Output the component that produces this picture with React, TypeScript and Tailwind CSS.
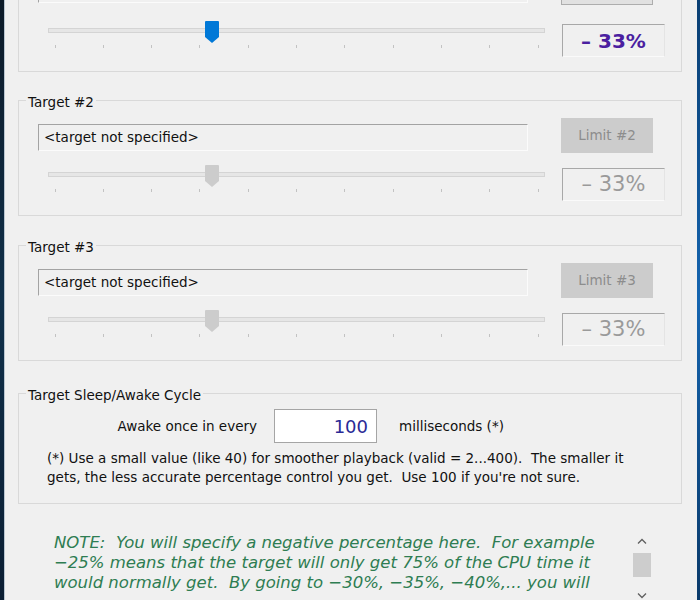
import React from 'react';

const TICKS = [0, 1, 2, 3, 4, 5, 6, 7, 8, 9, 10];

const Slider = ({ active }: { active: boolean }) => {
  const thumbX = 164;
  return (
    <svg width="497" height="28" viewBox="0 0 497 28" className="shrink-0">
      <rect x="0.5" y="7.5" width="496" height="4" fill="#e6e6e6" stroke="#d4d4d4" />
      {TICKS.map((i) => {
        const x = Math.round(6.5 + i * 48.3) + 0.5;
        return <line key={i} x1={x} y1="24" x2={x} y2="27" stroke="#c2c2c2" strokeWidth="1" />;
      })}
      <path
        d={`M${thumbX - 6} 0 H${thumbX + 6} Q${thumbX + 7} 0 ${thumbX + 7} 1 V16 L${thumbX} 22 L${thumbX - 7} 16 V1 Q${thumbX - 7} 0 ${thumbX - 6} 0 Z`}
        fill={active ? '#0078d7' : '#cccccc'}
      />
    </svg>
  );
};

// first group is scrolled mostly out of view, only its lower half shows
const TargetGroup = ({
  n,
  active,
  className,
  first,
}: {
  n: number;
  active: boolean;
  className: string;
  first?: boolean;
}) => {
  return (
    <div className={`h-[116px] border border-[#d9d9d9] ${className}`}>
      <div className="-mt-[9px] ml-[7px] h-[19px] w-fit bg-[#f0f0f0] px-[2px] pt-[2px] leading-[17px]">
        {first ? '' : `Target #${n}`}
      </div>

      <div className={`flex items-start ${first ? 'mt-[3px]' : 'mt-[7px]'}`}>
        <div className="ml-[19px] mt-[6px] flex h-[27px] w-[490px] items-center border-t border-l border-t-[#a3a3a3] border-l-[#a3a3a3] border-b border-r border-b-[#fbfbfb] border-r-[#fbfbfb] pl-[5px]">
          {active ? '' : '<target not specified>'}
        </div>
        <div
          className={`ml-[33px] flex h-[35px] w-[92px] items-center justify-center ${
            active ? 'border border-[#adadad] bg-[#e1e1e1] text-[#111]' : 'bg-[#cccccc] text-[#8d8d8d]'
          }`}
        >
          {first ? '' : `Limit #${n}`}
        </div>
      </div>

      <div className={`flex items-start ${first ? 'mt-[16px]' : 'mt-[12px]'}`}>
        <div className="ml-[29px]">
          <Slider active={active} />
        </div>
        <div className="ml-[17px] mt-[3px] flex h-[33px] w-[103px] items-center justify-center border-t border-l border-t-[#a8a8a8] border-l-[#a8a8a8] border-b border-r border-b-[#fafafa] border-r-[#e4e4e4]">
          {active ? (
            <span className="text-[20px] font-bold text-[#4b1fa0]">– 33%</span>
          ) : (
            <span className="text-[21px] text-[#9a9a9a]">– 33%</span>
          )}
        </div>
      </div>
    </div>
  );
};

const Chevron = ({ up }: { up: boolean }) => (
  <svg width="18" height="17" viewBox="0 0 18 17">
    <path
      d={up ? 'M5 10.5 L9 6.5 L13 10.5' : 'M5 6.5 L9 10.5 L13 6.5'}
      fill="none"
      stroke="#5f5f5f"
      strokeWidth="1.3"
    />
  </svg>
);

export default function App() {
  return (
    <div className="flex h-[600px] w-[700px] overflow-hidden bg-[#f0f0f0] font-['DejaVu_Sans',sans-serif] text-[13.5px] text-[#111]">
      <div className="w-[4px] shrink-0 bg-gradient-to-b from-[#0c1a28] via-[#10304a] to-[#0b1e33]" />
      <div className="w-px shrink-0 bg-[#b9c6d1]" />

      <div className="flex-1 pl-[13px] pr-[15px]">
        <TargetGroup n={1} active className="-mt-[44px]" first />
        <TargetGroup n={2} active={false} className="mt-[28px]" />
        <TargetGroup n={3} active={false} className="mt-[29px]" />

        {/* Sleep / awake cycle */}
        <div className="mt-[32px] h-[111px] border border-[#d9d9d9]">
          <div className="-mt-[9px] ml-[7px] h-[19px] w-fit bg-[#f0f0f0] px-[2px] pt-[2px] leading-[17px]">
            Target Sleep/Awake Cycle
          </div>
          <div className="mt-[5px] flex items-center">
            <div className="w-[255px] pr-[17px] text-right">Awake once in every</div>
            <div className="flex h-[34px] w-[103px] items-center justify-end border border-[#a5a5a5] bg-white pr-[8px] text-[18px] text-[#2a2a96]">
              100
            </div>
            <div className="ml-[22px]">milliseconds (*)</div>
          </div>
          <p className="mt-[6px] whitespace-pre pl-[28px] leading-[19px]">
            {'(*) Use a small value (like 40) for smoother playback (valid = 2...400).  The smaller it\ngets, the less accurate percentage control you get.  Use 100 if you\'re not sure.'}
          </p>
        </div>

        {/* Note */}
        <div className="mt-[29px] flex">
          <p className="ml-[36px] w-[579px] whitespace-pre text-[16.5px] italic leading-[20px] text-[#2e7d52]">
            {'NOTE:  You will specify a negative percentage here.  For example\n−25% means that the target will only get 75% of the CPU time it\nwould normally get.  By going to −30%, −35%, −40%,... you will'}
          </p>
          <div className="flex w-[18px] flex-col">
            <Chevron up />
            <div className="mt-[3px] h-[24px] w-[18px] bg-[#cdcdcd]" />
            <div className="mt-[10px]">
              <Chevron up={false} />
            </div>
          </div>
        </div>
      </div>

      <div className="w-[3px] shrink-0 bg-gradient-to-b from-[#0a3f73] via-[#1565b0] to-[#0a3a6a]" />
    </div>
  );
}
